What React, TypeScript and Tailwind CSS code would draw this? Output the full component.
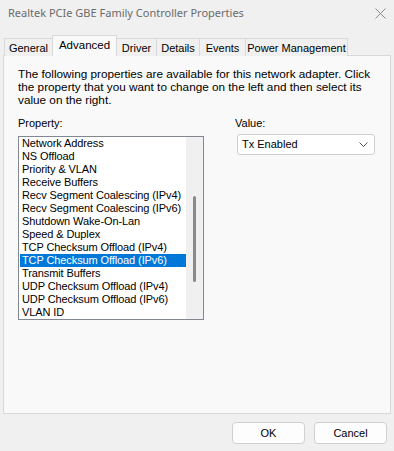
import React from 'react';

const tabs = [
    { label: 'General', w: 'w-[49px]' },
    { label: 'Advanced', w: 'w-[65px]', active: true },
    { label: 'Driver', w: 'w-[41px]' },
    { label: 'Details', w: 'w-[44px]' },
    { label: 'Events', w: 'w-[47px]' },
    { label: 'Power Management', w: 'w-[103px]' },
];

const properties = [
    'Network Address',
    'NS Offload',
    'Priority & VLAN',
    'Receive Buffers',
    'Recv Segment Coalescing (IPv4)',
    'Recv Segment Coalescing (IPv6)',
    'Shutdown Wake-On-Lan',
    'Speed & Duplex',
    'TCP Checksum Offload (IPv4)',
    'TCP Checksum Offload (IPv6)',
    'Transmit Buffers',
    'UDP Checksum Offload (IPv4)',
    'UDP Checksum Offload (IPv6)',
    'VLAN ID',
];

const selected = 'TCP Checksum Offload (IPv6)';

export default function App() {
    return (
        <div
            className="w-[394px] h-[451px] bg-[#f0f0f0] flex flex-col text-[11px] text-black"
            style={{ fontFamily: '"Liberation Sans", Arial, sans-serif' }}
        >
            {/* Title bar */}
            <div className="h-[26px] flex items-center justify-between pl-[8px] pr-[8px]">
                <span className="text-[#6b6b6b] text-[11px]" style={{ fontFamily: '"Noto Sans", "Liberation Sans", sans-serif' }}>
                    Realtek PCIe GBE Family Controller Properties
                </span>
                <svg className="w-[11px] h-[11px]" viewBox="0 0 11 11" fill="none" stroke="#8a8a8a" strokeWidth={1}>
                    <path d="M0.5 0.5l10 10M10.5 0.5l-10 10" />
                </svg>
            </div>

            {/* Tabs */}
            <div className="mt-[9px] h-[21px] flex items-end pl-[5px] relative z-10">
                {tabs.map((t) =>
                    t.active ? (
                        <div
                            key={t.label}
                            className={`${t.w} h-[21px] -ml-px border border-b-0 border-[#d9d9d9] bg-[#f9f9f9] flex items-start justify-center pt-[2px] leading-[14px] text-[11.5px] whitespace-nowrap`}
                        >
                            {t.label}
                        </div>
                    ) : (
                        <div
                            key={t.label}
                            className={`${t.w} h-[18px] -ml-px border border-b-0 border-[#d9d9d9] bg-[#f0f0f0] flex items-center justify-center leading-[14px] whitespace-nowrap`}
                        >
                            {t.label}
                        </div>
                    ),
                )}
            </div>

            {/* Panel */}
            <div className="mx-[3px] -mt-px h-[359px] border border-[#d9d9d9] bg-[#f9f9f9] pl-[14px] pr-[10px]">
                <p className="mt-[11px] leading-[13px] whitespace-nowrap text-[11.75px]">
                    The following properties are available for this network adapter. Click
                    <br />
                    the property that you want to change on the left and then select its
                    <br />
                    value on the right.
                </p>

                <div className="mt-[11px] flex">
                    {/* Property list */}
                    <div className="w-[186px]">
                        <div className="leading-[13px]">Property:</div>
                        <div className="mt-[6px] w-[186px] h-[184px] border border-[#828790] bg-white flex">
                            <div className="flex-1 flex flex-col">
                                {properties.map((p) => (
                                    <div
                                        key={p}
                                        className={`h-[13px] leading-[13px] ml-px pl-[2px] whitespace-nowrap tracking-[-0.1px] ${
                                            p === selected ? 'bg-[#0078d7] text-white' : ''
                                        }`}
                                    >
                                        {p}
                                    </div>
                                ))}
                            </div>
                            <div className="w-[17px] bg-[#f0f0f0] flex justify-center">
                                <div className="mt-[59px] w-[3px] h-[86px] rounded-full bg-[#8a8a8a]" />
                            </div>
                        </div>
                    </div>

                    {/* Value */}
                    <div className="ml-[31px]">
                        <div className="leading-[13px]">Value:</div>
                        <div className="mt-[4px] ml-[2px] w-[138px] h-[21px] border border-[#cfcfcf] rounded-[3px] bg-white flex items-center justify-between pl-[4px] pr-[6px]">
                            <span>Tx Enabled</span>
                            <svg className="w-[9px] h-[5px]" viewBox="0 0 9 5" fill="none" stroke="#555" strokeWidth={1}>
                                <path d="M0.5 0.5l4 4 4-4" />
                            </svg>
                        </div>
                    </div>
                </div>
            </div>

            {/* Buttons */}
            <div className="mt-[8px] flex justify-end gap-[9px] pr-[7px]">
                <button className="w-[73px] h-[22px] border border-[#d0d0d0] rounded-[4px] bg-[#fdfdfd] leading-none">
                    OK
                </button>
                <button className="w-[73px] h-[22px] border border-[#d0d0d0] rounded-[4px] bg-[#fdfdfd] leading-none">
                    Cancel
                </button>
            </div>
        </div>
    );
}
